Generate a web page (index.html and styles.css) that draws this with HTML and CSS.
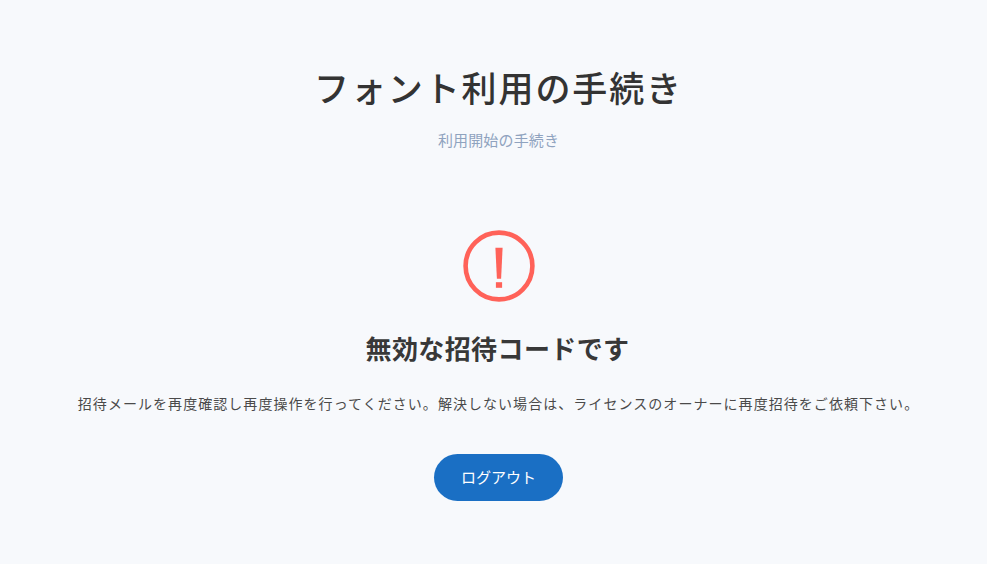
FILE: index.html
```html
<!DOCTYPE html>
<html lang="ja">
<head>
    <meta charset="UTF-8">
    <meta name="viewport" content="width=device-width, initial-scale=1.0">
    <title>フォント利用の手続き</title>
    <link rel="stylesheet" href="styles.css">
</head>
<body>
    <div class="container">
        <h1 class="page-title">フォント利用の手続き</h1>
        <p class="page-subtitle">利用開始の手続き</p>

        <svg class="error-icon" width="72" height="72" viewBox="0 0 72 72" aria-hidden="true">
            <circle cx="36" cy="36" r="33.4" fill="none" stroke="#ff6259" stroke-width="4.6"/>
            <path d="M32.4 17.8h7.2l-1.5 31h-4.2z" fill="#ff6259"/>
            <rect x="32.9" y="52.2" width="6.2" height="5.6" fill="#ff6259"/>
        </svg>

        <h2 class="error-title">無効な招待コードです</h2>
        <p class="error-text">招待メールを再度確認し再度操作を行ってください。解決しない場合は、ライセンスのオーナーに再度招待をご依頼下さい。</p>

        <button class="logout-button" type="button">ログアウト</button>
    </div>
</body>
</html>
```

FILE: styles.css
```css
* {
    box-sizing: border-box;
}

body {
    margin: 0;
    height: 564px;
    overflow: hidden;
    background-color: #f7f9fc;
    font-family: "Noto Sans CJK JP", "Noto Sans", sans-serif;
}

.container {
    display: flex;
    flex-direction: column;
    align-items: center;
    padding-top: 63px;
    padding-left: 10px;
}

.page-title {
    margin: 0;
    font-size: 35px;
    line-height: 48px;
    font-weight: 500;
    letter-spacing: 1.9px;
    color: #333333;
}

.page-subtitle {
    margin: 18px 0 0;
    font-size: 15px;
    line-height: 22px;
    letter-spacing: 0.15px;
    color: #8fa3bf;
}

.error-icon {
    display: block;
    margin-top: 79px;
}

.error-title {
    margin: 27px 2px 0 0;
    font-size: 26px;
    line-height: 38px;
    font-weight: 700;
    letter-spacing: 0.4px;
    color: #383838;
}

.error-text {
    margin: 25px 0 0;
    font-size: 14px;
    line-height: 22px;
    letter-spacing: 1.05px;
    color: #4a4a4a;
}

.logout-button {
    margin-top: 40px;
    width: 129px;
    height: 47px;
    padding-bottom: 3px;
    border: none;
    border-radius: 24px;
    background-color: #1a6fc4;
    color: #ffffff;
    font-family: inherit;
    font-size: 15px;
    cursor: pointer;
}
```
